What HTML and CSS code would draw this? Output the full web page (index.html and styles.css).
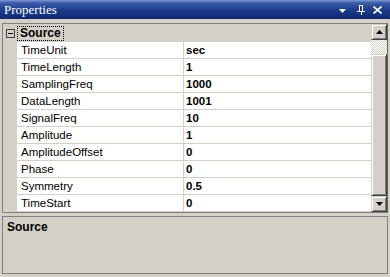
FILE: index.html
```html
<!DOCTYPE html>
<html>
<head>
<meta charset="utf-8">
<link rel="stylesheet" href="styles.css">
</head>
<body>
<div class="window">
  <div class="titlebar">
    <span class="title">Properties</span>
    <div class="tb-icons">
      <svg class="ic" width="8" height="5" viewBox="0 0 8 5"><path d="M0 0H7L3.5 4Z" fill="#fff"/></svg>
      <svg class="ic" width="8" height="10" viewBox="0 0 8 10"><path d="M2 0.5H6M2 0.5V6M5 0.5V6M0 6.5H8M4 6.5V10" stroke="#fff" stroke-width="1" fill="none" shape-rendering="crispEdges"/><rect x="5" y="0" width="1" height="7" fill="#fff"/></svg>
      <svg class="ic" width="9" height="8" viewBox="0 0 9 8"><path d="M0.5 0.5L8.5 7.5M8.5 0.5L0.5 7.5" stroke="#fff" stroke-width="1.6" fill="none"/></svg>
    </div>
  </div>
  <div class="grid">
    <div class="rows">
      <div class="cat">
        <div class="gutter"><span class="toggle"><span class="minus"></span></span></div>
        <span class="cat-label">Source</span>
      </div>
      <div class="row"><div class="gutter"></div><div class="name">TimeUnit</div><div class="val">sec</div></div>
      <div class="row"><div class="gutter"></div><div class="name">TimeLength</div><div class="val">1</div></div>
      <div class="row"><div class="gutter"></div><div class="name">SamplingFreq</div><div class="val">1000</div></div>
      <div class="row"><div class="gutter"></div><div class="name">DataLength</div><div class="val">1001</div></div>
      <div class="row"><div class="gutter"></div><div class="name">SignalFreq</div><div class="val">10</div></div>
      <div class="row"><div class="gutter"></div><div class="name">Amplitude</div><div class="val">1</div></div>
      <div class="row"><div class="gutter"></div><div class="name">AmplitudeOffset</div><div class="val">0</div></div>
      <div class="row"><div class="gutter"></div><div class="name">Phase</div><div class="val">0</div></div>
      <div class="row"><div class="gutter"></div><div class="name">Symmetry</div><div class="val">0.5</div></div>
      <div class="row"><div class="gutter"></div><div class="name">TimeStart</div><div class="val">0</div></div>
    </div>
    <div class="scrollbar">
      <div class="sb-btn"><svg width="7" height="4" viewBox="0 0 7 4"><path d="M3.5 0L7 4H0Z" fill="#000"/></svg></div>
      <div class="sb-track"></div>
      <div class="sb-thumb"></div>
      <div class="sb-btn"><svg width="7" height="4" viewBox="0 0 7 4"><path d="M0 0H7L3.5 4Z" fill="#000"/></svg></div>
    </div>
  </div>
  <div class="desc">
    <div class="desc-title">Source</div>
  </div>
</div>
</body>
</html>
```
FILE: styles.css
```css
html, body {
  margin: 0;
  padding: 0;
  background: #d4d0c8;
}
body {
  width: 390px;
  height: 277px;
  overflow: hidden;
  font-family: "Liberation Sans", Arial, sans-serif;
  font-size: 11.5px;
  color: #000;
}
.window {
  display: flex;
  flex-direction: column;
  height: 277px;
}
.titlebar {
  height: 19px;
  display: flex;
  align-items: center;
  justify-content: space-between;
  background: linear-gradient(to bottom, #7d98d4 0px, #3a5ba8 3px, #1d3c8a 10px, #0c2872 19px);
  padding: 0 8px 0 4px;
  flex: none;
}
.title {
  font-family: "Liberation Serif", "Times New Roman", serif;
  font-size: 13px;
  color: #fff;
  line-height: 19px;
}
.tb-icons {
  display: flex;
  align-items: center;
  gap: 8px;
}
.tb-icons .ic {
  display: block;
}
.tb-icons .ic:first-child {
  margin-top: 3px;
  margin-right: 2px;
}
.grid {
  margin: 4px 2px 0 2px;
  border: 1px solid #808080;
  border-right-color: #606060;
  height: 188px;
  display: flex;
  flex: none;
  background: #d4d0c8;
}
.rows {
  flex: 1;
  display: flex;
  flex-direction: column;
}
.cat {
  height: 18px;
  display: flex;
  align-items: center;
  background: #d4d0c8;
}
.gutter {
  width: 14px;
  flex: none;
  align-self: stretch;
  display: flex;
  align-items: center;
  justify-content: center;
  background: #d4d0c8;
}
.toggle {
  width: 7px;
  height: 7px;
  border: 1px solid #404040;
  background: #d4d0c8;
  display: flex;
  align-items: center;
  justify-content: center;
  margin-top: 1px;
}
.minus {
  width: 5px;
  height: 1px;
  background: #000;
}
.cat-label {
  font-weight: bold;
  font-size: 12px;
  padding: 1px 3px 1px 3px;
  outline: 1px dotted #000;
  outline-offset: -1px;
  line-height: 13px;
}
.row {
  height: 16px;
  display: flex;
  border-bottom: 1px solid #d4d0c8;
}
.name {
  width: 162px;
  padding-left: 4px;
  background: #fff;
  line-height: 16px;
  border-right: 1px solid #d4d0c8;
}
.val {
  flex: 1;
  background: #fff;
  font-weight: bold;
  padding-left: 2px;
  line-height: 16px;
}
.scrollbar {
  width: 16px;
  flex: none;
  display: flex;
  flex-direction: column;
}
.sb-btn {
  height: 16px;
  box-sizing: border-box;
  background: #d4d0c8;
  border-top: 1px solid #d4d0c8;
  border-left: 1px solid #d4d0c8;
  border-right: 1px solid #404040;
  border-bottom: 1px solid #404040;
  box-shadow: inset 1px 1px 0 #fff, inset -1px -1px 0 #808080;
  display: flex;
  align-items: center;
  justify-content: center;
}
.sb-track {
  height: 14px;
  background: repeating-conic-gradient(#d4d0c8 0 25%, #fff 0 50%) 0 0 / 2px 2px;
}
.sb-thumb {
  flex: 1;
  box-sizing: border-box;
  background: #d4d0c8;
  border-top: 1px solid #d4d0c8;
  border-left: 1px solid #d4d0c8;
  border-right: 1px solid #404040;
  border-bottom: 1px solid #404040;
  box-shadow: inset 1px 1px 0 #fff, inset -1px -1px 0 #808080;
}
.desc {
  margin: 3px 2px 0 2px;
  height: 58px;
  border: 1px solid #808080;
  padding: 4px 4px;
  box-sizing: border-box;
  flex: none;
}
.desc-title {
  font-weight: bold;
  font-size: 12px;
  line-height: 13px;
}
```
